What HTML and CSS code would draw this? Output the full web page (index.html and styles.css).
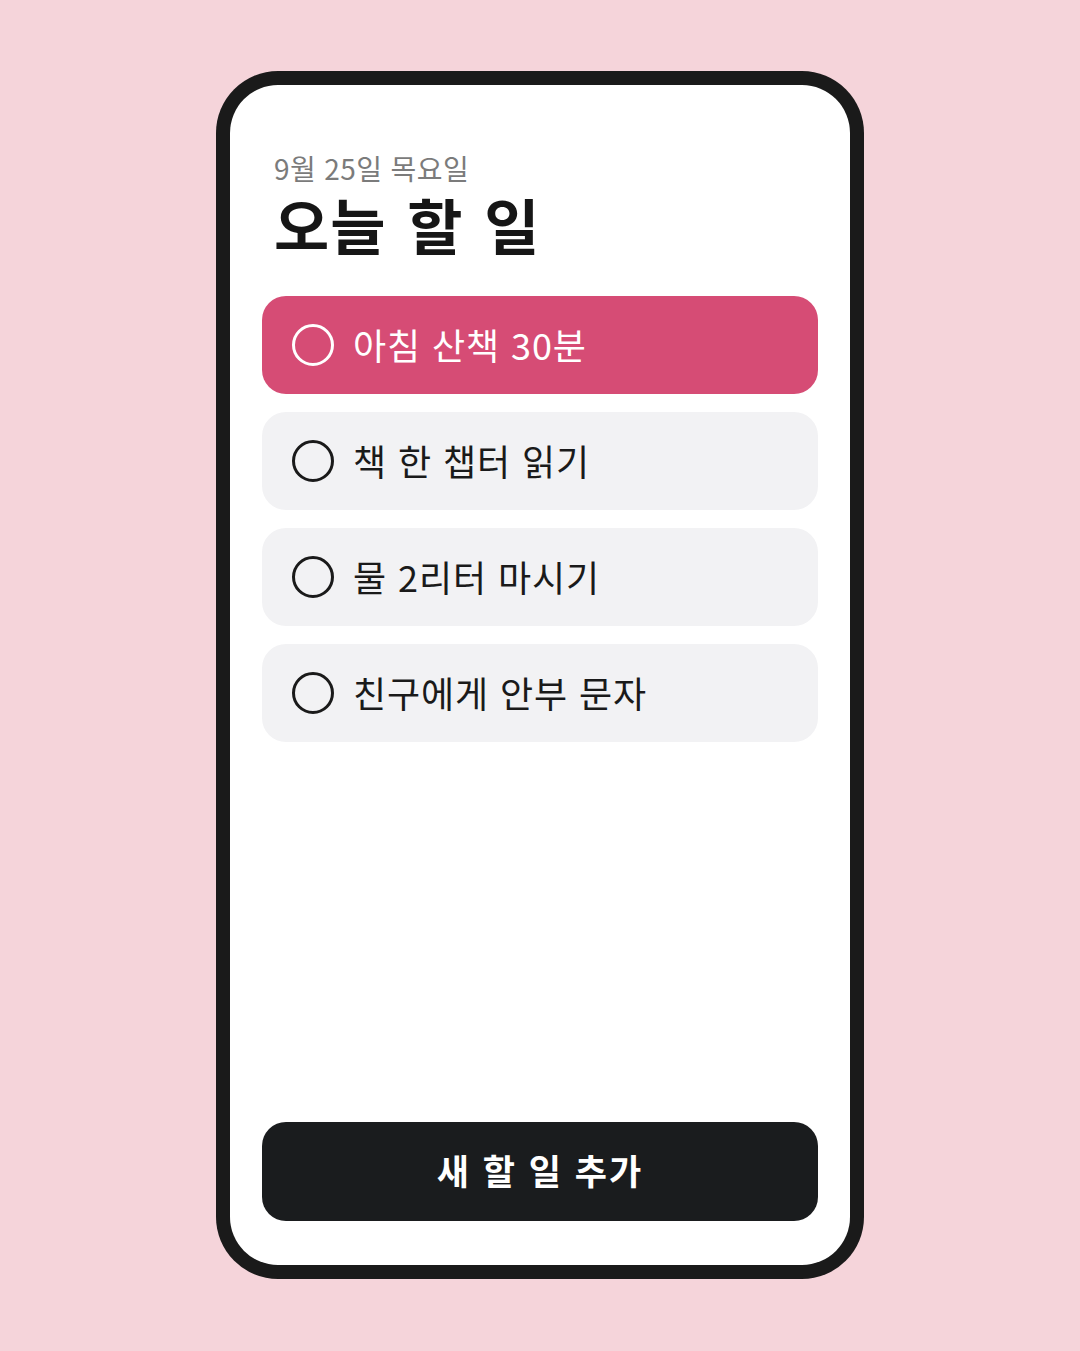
FILE: index.html
```html
<!DOCTYPE html>
<html lang="ko">
<head>
<meta charset="utf-8">
<title>오늘 할 일</title>
<link rel="stylesheet" href="styles.css">
</head>
<body>
<div class="stage">
  <div class="phone">
    <div class="screen">
      <header class="header">
        <div class="date">9월 25일 목요일</div>
        <h1 class="title">오늘 할 일</h1>
      </header>
      <ul class="list">
        <li class="item item-active"><span class="check"></span><span class="label">아침 산책 30분</span></li>
        <li class="item"><span class="check"></span><span class="label">책 한 챕터 읽기</span></li>
        <li class="item"><span class="check"></span><span class="label">물 2리터 마시기</span></li>
        <li class="item"><span class="check"></span><span class="label">친구에게 안부 문자</span></li>
      </ul>
      <button class="add">새 할 일 추가</button>
    </div>
  </div>
</div>
</body>
</html>
```
FILE: styles.css
```css
* { box-sizing: border-box; }
html, body { margin: 0; padding: 0; }
body {
  width: 1080px;
  height: 1351px;
  background: #f5d4da;
  font-family: "Noto Sans CJK KR", "Noto Sans", sans-serif;
  overflow: hidden;
}
.stage {
  height: 1351px;
  display: flex;
  justify-content: center;
  padding-top: 71px;
}
.phone {
  width: 648px;
  height: 1208px;
  background: #1a1a1a;
  border-radius: 62px;
  padding: 14px;
}
.screen {
  height: 100%;
  background: #ffffff;
  border-radius: 48px;
  padding: 67px 32px 44px;
  display: flex;
  flex-direction: column;
}
.header {
  padding: 0 12px;
}
.date {
  font-size: 28px;
  line-height: 32px;
  color: #7b7b7b;
  letter-spacing: 0.4px;
}
.title {
  margin: 6px 0 0;
  font-size: 60px;
  line-height: 68px;
  font-weight: 700;
  color: #161616;
  letter-spacing: 1px;
  word-spacing: 3px;
}
.list {
  list-style: none;
  margin: 38px 0 0;
  padding: 0;
  display: flex;
  flex-direction: column;
  gap: 18px;
}
.item {
  height: 98px;
  border-radius: 24px;
  background: #f2f2f4;
  display: flex;
  align-items: center;
  padding-left: 30px;
  gap: 19px;
  color: #1a1a1a;
}
.item-active {
  background: #d64c75;
  color: #ffffff;
}
.check {
  width: 42px;
  height: 42px;
  border-radius: 50%;
  border: 3px solid currentColor;
  flex: none;
}
.label {
  font-size: 36px;
  line-height: 48px;
  letter-spacing: 0.9px;
  padding-bottom: 3px;
}
.add {
  margin-top: auto;
  height: 99px;
  border: none;
  border-radius: 24px;
  background: #1a1c1e;
  color: #ffffff;
  font-family: "Noto Sans CJK KR", "Noto Sans", sans-serif;
  font-size: 35px;
  font-weight: 700;
  line-height: 48px;
  letter-spacing: 2px;
  padding: 0 0 4px;
}
```
